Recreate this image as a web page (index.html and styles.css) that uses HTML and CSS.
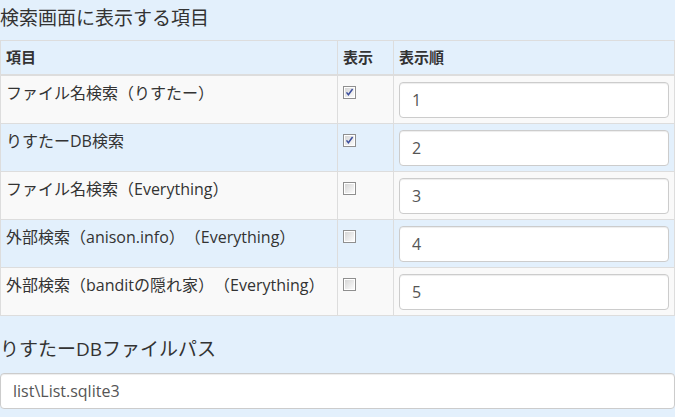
FILE: index.html
```html
<!DOCTYPE html>
<html lang="ja">
<head>
<meta charset="utf-8">
<title>検索画面設定</title>
<link rel="stylesheet" href="styles.css">
</head>
<body>
<h2 class="heading">検索画面に表示する項目</h2>
<table class="grid">
  <colgroup>
    <col class="c-name">
    <col class="c-show">
    <col class="c-order">
  </colgroup>
  <thead>
    <tr><th>項目</th><th>表示</th><th>表示順</th></tr>
  </thead>
  <tbody>
    <tr>
      <td>ファイル名検索（りすたー）</td>
      <td><span class="cb"><svg width="13" height="13" viewBox="0 0 13 13"><defs><linearGradient id="g1" x1="0" y1="0" x2="1" y2="1"><stop offset="0" stop-color="#d6d6d6"/><stop offset="1" stop-color="#fbfbfb"/></linearGradient></defs><rect x="0.5" y="0.5" width="12" height="12" fill="#fff" stroke="#8f8f8f"/><rect x="2" y="2" width="9" height="9" fill="url(#g1)"/><path d="M3.5 6.4 L5.4 8.8 L9.6 3" fill="none" stroke="#3c4f9e" stroke-width="1.5"/></svg></span></td>
      <td><input class="field" type="text" value="1"></td>
    </tr>
    <tr>
      <td>りすたーDB検索</td>
      <td><span class="cb"><svg width="13" height="13" viewBox="0 0 13 13"><rect x="0.5" y="0.5" width="12" height="12" fill="#fff" stroke="#8f8f8f"/><rect x="2" y="2" width="9" height="9" fill="url(#g1)"/><path d="M3.5 6.4 L5.4 8.8 L9.6 3" fill="none" stroke="#3c4f9e" stroke-width="1.5"/></svg></span></td>
      <td><input class="field" type="text" value="2"></td>
    </tr>
    <tr>
      <td>ファイル名検索（Everything）</td>
      <td><span class="cb"><svg width="13" height="13" viewBox="0 0 13 13"><rect x="0.5" y="0.5" width="12" height="12" fill="#fff" stroke="#8f8f8f"/><rect x="2" y="2" width="9" height="9" fill="url(#g1)"/></svg></span></td>
      <td><input class="field" type="text" value="3"></td>
    </tr>
    <tr>
      <td>外部検索（anison.info）（Everything）</td>
      <td><span class="cb"><svg width="13" height="13" viewBox="0 0 13 13"><rect x="0.5" y="0.5" width="12" height="12" fill="#fff" stroke="#8f8f8f"/><rect x="2" y="2" width="9" height="9" fill="url(#g1)"/></svg></span></td>
      <td><input class="field" type="text" value="4"></td>
    </tr>
    <tr>
      <td>外部検索（banditの隠れ家）（Everything）</td>
      <td><span class="cb"><svg width="13" height="13" viewBox="0 0 13 13"><rect x="0.5" y="0.5" width="12" height="12" fill="#fff" stroke="#8f8f8f"/><rect x="2" y="2" width="9" height="9" fill="url(#g1)"/></svg></span></td>
      <td><input class="field" type="text" value="5"></td>
    </tr>
  </tbody>
</table>
<h2 class="heading heading-2">りすたーDBファイルパス</h2>
<input class="field field-wide" type="text" value="list\List.sqlite3">
</body>
</html>
```

FILE: styles.css
```css
html, body {
  margin: 0;
  padding: 0;
  background: #e3f0fc;
  color: #333;
  font-family: "Open Sans", "Noto Sans CJK JP", sans-serif;
  font-size: 15px;
  line-height: 22px;
  text-spacing-trim: space-all;
}

.heading {
  margin: 8px 0 11px;
  font-size: 19px;
  font-weight: normal;
  line-height: 21px;
  color: #333;
}

.heading-2 {
  margin: 23px 0 13px;
}

.grid {
  width: 675px;
  border-collapse: collapse;
  border: 1px solid #ddd;
  table-layout: fixed;
}

.c-name { width: 337px; }
.c-show { width: 56px; }

.grid th,
.grid td {
  border: 1px solid #ddd;
  padding: 5px;
  text-align: left;
  vertical-align: top;
}

.grid th {
  font-weight: bold;
  padding-bottom: 6px;
  border-bottom: 2px solid #ddd;
}

.grid td {
  padding: 6px 5px 5px;
  height: 36px;
  font-size: 16px;
}

.grid tbody tr:nth-child(odd) {
  background: #f9f9f9;
}

.cb {
  display: block;
  width: 13px;
  height: 13px;
  margin-top: 4px;
}

.cb svg {
  display: block;
}

.field {
  box-sizing: border-box;
  display: block;
  width: 100%;
  height: 36px;
  margin: 0;
  padding: 6px 12px;
  font-family: "Open Sans", "Noto Sans CJK JP", sans-serif;
  font-size: 16px;
  color: #555;
  background: #fff;
  border: 1px solid #ccc;
  border-radius: 4px;
  box-shadow: inset 0 1px 1px rgba(0, 0, 0, 0.075);
}

.field-wide {
  width: 675px;
}
```
